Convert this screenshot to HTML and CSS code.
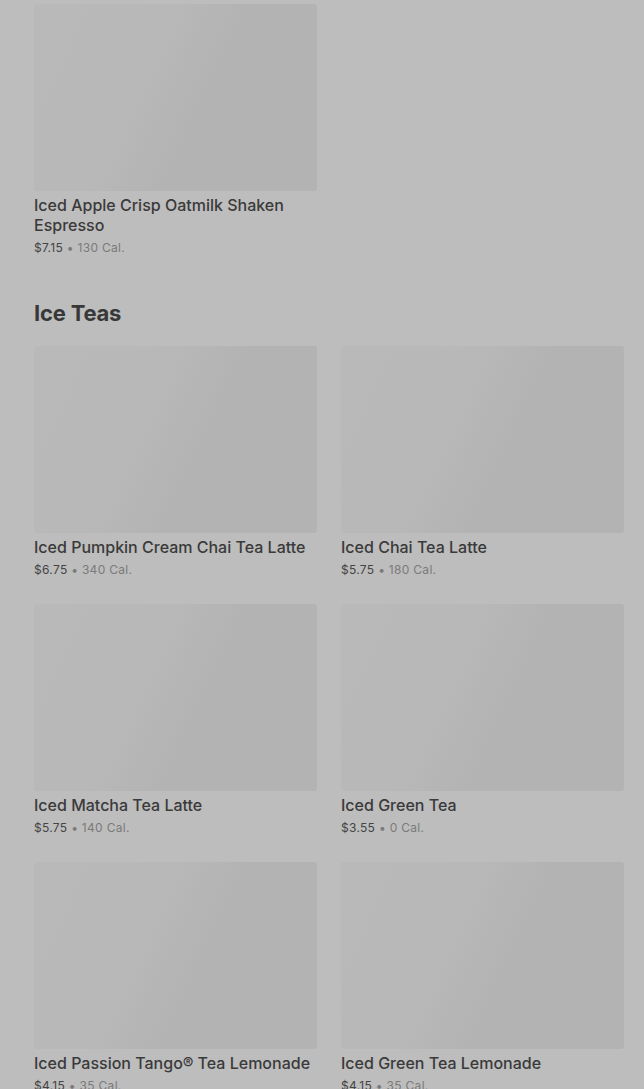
FILE: index.html
```html
<!DOCTYPE html>
<html lang="en">
<head>
<meta charset="utf-8">
<title>Menu</title>
<link rel="stylesheet" href="styles.css">
</head>
<body>
<main class="page">
  <section class="section">
    <div class="grid">
      <article class="card">
        <div class="thumb"></div>
        <div class="info">
          <h3 class="name">Iced Apple Crisp Oatmilk Shaken Espresso</h3>
          <p class="meta"><span class="price">$7.15</span> <span class="cal">• 130 Cal.</span></p>
        </div>
      </article>
    </div>
  </section>
  <section class="section">
    <h2 class="heading">Ice Teas</h2>
    <div class="grid">
      <article class="card">
        <div class="thumb"></div>
        <div class="info">
          <h3 class="name">Iced Pumpkin Cream Chai Tea Latte</h3>
          <p class="meta"><span class="price">$6.75</span> <span class="cal">• 340 Cal.</span></p>
        </div>
      </article>
      <article class="card">
        <div class="thumb"></div>
        <div class="info">
          <h3 class="name">Iced Chai Tea Latte</h3>
          <p class="meta"><span class="price">$5.75</span> <span class="cal">• 180 Cal.</span></p>
        </div>
      </article>
      <article class="card">
        <div class="thumb"></div>
        <div class="info">
          <h3 class="name">Iced Matcha Tea Latte</h3>
          <p class="meta"><span class="price">$5.75</span> <span class="cal">• 140 Cal.</span></p>
        </div>
      </article>
      <article class="card">
        <div class="thumb"></div>
        <div class="info">
          <h3 class="name">Iced Green Tea</h3>
          <p class="meta"><span class="price">$3.55</span> <span class="cal">• 0 Cal.</span></p>
        </div>
      </article>
      <article class="card">
        <div class="thumb"></div>
        <div class="info">
          <h3 class="name">Iced Passion Tango® Tea Lemonade</h3>
          <p class="meta"><span class="price">$4.15</span> <span class="cal">• 35 Cal.</span></p>
        </div>
      </article>
      <article class="card">
        <div class="thumb"></div>
        <div class="info">
          <h3 class="name">Iced Green Tea Lemonade</h3>
          <p class="meta"><span class="price">$4.15</span> <span class="cal">• 35 Cal.</span></p>
        </div>
      </article>
    </div>
  </section>
</main>
</body>
</html>
```
FILE: styles.css
```css
html, body {
  margin: 0;
  padding: 0;
  background: #bdbdbd;
}
body {
  font-family: "Inter", "Noto Sans", sans-serif;
  color: #3a3a3a;
  overflow: hidden;
}
.page {
  padding: 4px 20px 0 34px;
}
.section {
  display: flex;
  flex-direction: column;
}
.grid {
  display: grid;
  grid-template-columns: 283px 283px;
  column-gap: 24px;
  row-gap: 25px;
}
.card {
  display: flex;
  flex-direction: column;
}
.thumb {
  height: 187px;
  border-radius: 3px;
  background: linear-gradient(115deg, #b9b9b9 0%, #b8b8b8 38%, #b3b3b3 58%, #b3b3b3 100%);
}
.info {
  padding-top: 4px;
}
.name {
  margin: 0;
  font-size: 16px;
  line-height: 20px;
  font-weight: 500;
  color: #3a3a3a;
  letter-spacing: 0;
}
.meta {
  margin: 4px 0 0;
  font-size: 12px;
  line-height: 18px;
  letter-spacing: 0.3px;
}
.price {
  color: #444;
}
.cal {
  color: #7a7a7a;
}
.heading {
  margin: 42px 0 19px;
  font-size: 22px;
  line-height: 28px;
  font-weight: 700;
  color: #383838;
  letter-spacing: -0.2px;
}
```
